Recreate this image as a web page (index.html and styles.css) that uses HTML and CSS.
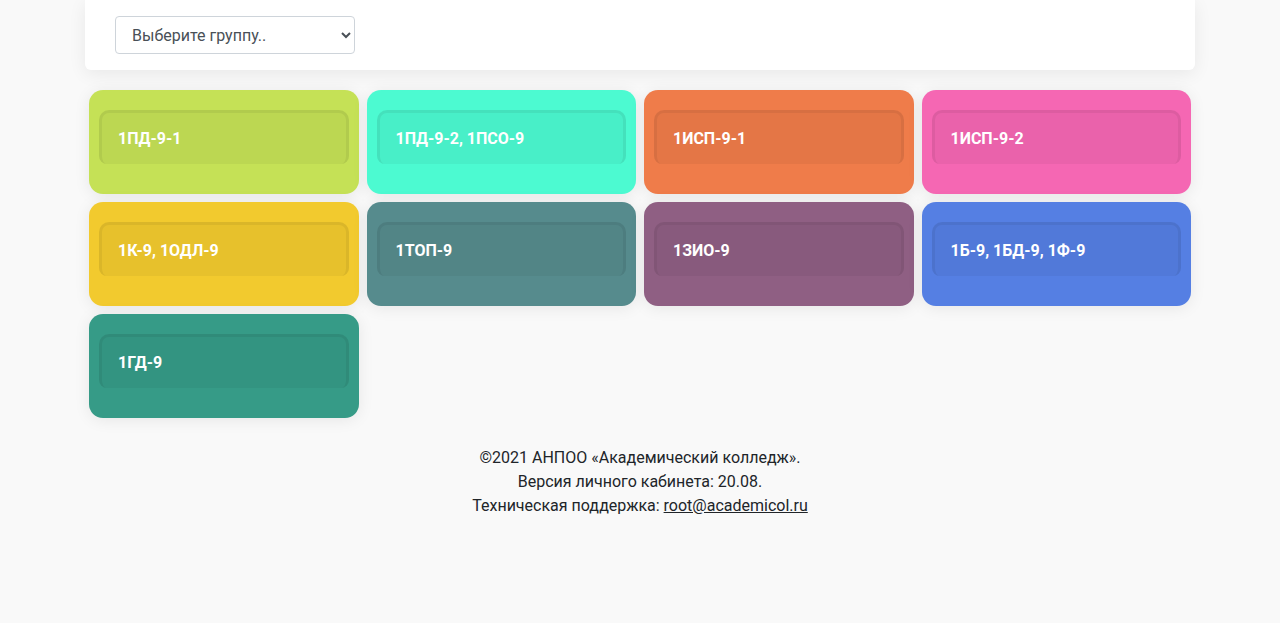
FILE: index.html
```html
<!DOCTYPE html>
<html lang="ru">
<head>
<meta charset="utf-8">
<title>Группы</title>
<link rel="stylesheet" href="styles.css">
</head>
<body>
<div class="container">
  <div class="top-card">
    <select class="group-select">
      <option>Выберите группу..</option>
    </select>
  </div>
  <div class="tiles">
    <a class="tile c1"><span class="tile-label">1ПД-9-1</span></a>
    <a class="tile c2"><span class="tile-label">1ПД-9-2, 1ПСО-9</span></a>
    <a class="tile c3"><span class="tile-label">1ИСП-9-1</span></a>
    <a class="tile c4"><span class="tile-label">1ИСП-9-2</span></a>
    <a class="tile c5"><span class="tile-label">1К-9, 1ОДЛ-9</span></a>
    <a class="tile c6"><span class="tile-label">1ТОП-9</span></a>
    <a class="tile c7"><span class="tile-label">1ЗИО-9</span></a>
    <a class="tile c8"><span class="tile-label">1Б-9, 1БД-9, 1Ф-9</span></a>
    <a class="tile c9"><span class="tile-label">1ГД-9</span></a>
  </div>
  <footer class="footer">
    <div>©2021 АНПОО «Академический колледж».</div>
    <div>Версия личного кабинета: 20.08.</div>
    <div>Техническая поддержка: <a class="mail" href="#">root@academicol.ru</a></div>
  </footer>
</div>
</body>
</html>
```
FILE: styles.css
```css
html, body {
  margin: 0;
  padding: 0;
}
body {
  background: #f9f9f9;
  font-family: Roboto, "Liberation Sans", sans-serif;
  font-size: 16px;
  line-height: 24px;
  color: #212529;
}
.container {
  width: 1110px;
  margin: 0 auto;
}
.top-card {
  background: #fff;
  height: 70px;
  border-radius: 0 0 6px 6px;
  box-shadow: 0 4px 18px rgba(0, 0, 0, 0.07);
  padding: 16px 30px 0;
  box-sizing: border-box;
}
.group-select {
  width: 240px;
  height: 38px;
  padding: 0 8px 0 12px;
  border: 1px solid #ced4da;
  border-radius: 4px;
  background: #fff;
  color: #495057;
  font-family: Roboto, "Liberation Sans", sans-serif;
  font-size: 16px;
}
.tiles {
  display: grid;
  grid-template-columns: repeat(4, 1fr);
  gap: 8px;
  margin: 20px 4px 0;
}
.tile {
  display: block;
  height: 104px;
  border-radius: 14px;
  padding: 20px 10px 0;
  box-sizing: border-box;
  box-shadow: 0 2px 16px rgba(0, 0, 0, 0.08);
}
.tile-label {
  display: flex;
  align-items: center;
  height: 54px;
  box-sizing: border-box;
  padding: 0 16px;
  border: 3px solid rgba(0, 0, 0, 0.06);
  border-bottom: 0;
  border-radius: 10px 10px 8px 8px;
  background: rgba(0, 0, 0, 0.045);
  color: #fff;
  font-weight: 700;
  font-size: 16px;
}
.c1 { background: #c5e156; }
.c2 { background: #4cfad1; }
.c3 { background: #ef7c4a; }
.c4 { background: #f567b3; }
.c5 { background: #f2ca2e; }
.c6 { background: #568b8d; }
.c7 { background: #8f5f83; }
.c8 { background: #557fe3; }
.c9 { background: #369b87; }
.footer {
  margin-top: 28px;
  text-align: center;
}
.mail {
  color: #212529;
  text-decoration: underline;
}
```
